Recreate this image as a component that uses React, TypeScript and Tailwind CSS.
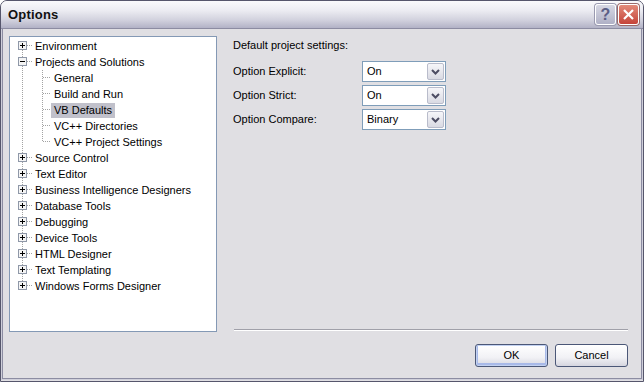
import React from "react";

type TreeNode = {
  label: string;
  expanded?: boolean;
  children?: string[];
};

const tree: TreeNode[] = [
  { label: "Environment" },
  {
    label: "Projects and Solutions",
    expanded: true,
    children: [
      "General",
      "Build and Run",
      "VB Defaults",
      "VC++ Directories",
      "VC++ Project Settings",
    ],
  },
  { label: "Source Control" },
  { label: "Text Editor" },
  { label: "Business Intelligence Designers" },
  { label: "Database Tools" },
  { label: "Debugging" },
  { label: "Device Tools" },
  { label: "HTML Designer" },
  { label: "Text Templating" },
  { label: "Windows Forms Designer" },
];

const dotted = "#a3a3a3";

function ExpandBox({ expanded }: { expanded?: boolean }) {
  return (
    <>
      <rect x="8.5" y="3.5" width="8" height="8" fill="#f4f4f4" stroke="#8f98a8" />
      <line x1="10" y1="7.5" x2="15" y2="7.5" stroke="#000" />
      {!expanded && <line x1="12.5" y1="5" x2="12.5" y2="10" stroke="#000" />}
    </>
  );
}

function TopRow({
  node,
  first,
  last,
}: {
  node: TreeNode;
  first: boolean;
  last: boolean;
}) {
  return (
    <div className="flex h-4 items-center">
      <svg width="25" height="16" className="shrink-0">
        <line
          x1="12.5"
          y1={first ? 8 : 0}
          x2="12.5"
          y2={last ? 8 : 16}
          stroke={dotted}
          strokeDasharray="1 1"
        />
        <line x1="17" y1="7.5" x2="23" y2="7.5" stroke={dotted} strokeDasharray="1 1" />
        <ExpandBox expanded={node.expanded} />
      </svg>
      <span className="whitespace-nowrap">{node.label}</span>
    </div>
  );
}

function ChildRow({
  label,
  last,
  selected,
}: {
  label: string;
  last: boolean;
  selected: boolean;
}) {
  return (
    <div className="flex h-4 items-center">
      <svg width="41" height="16" className="shrink-0">
        <line x1="12.5" y1="0" x2="12.5" y2="16" stroke={dotted} strokeDasharray="1 1" />
        <line
          x1="32.5"
          y1="0"
          x2="32.5"
          y2={last ? 8 : 16}
          stroke={dotted}
          strokeDasharray="1 1"
        />
        <line x1="33" y1="7.5" x2="41" y2="7.5" stroke={dotted} strokeDasharray="1 1" />
      </svg>
      <span
        className={`whitespace-nowrap pl-[3px] pr-[3px] leading-[15px] ${
          selected ? "bg-[#c1c1cb]" : ""
        }`}
      >
        {label}
      </span>
    </div>
  );
}

function Combo({ value }: { value: string }) {
  return (
    <div className="flex h-[21px] w-[84px] items-center border border-[#7f9db9] bg-white p-px">
      <span className="flex-1 pl-[3px] leading-[17px]">{value}</span>
      <div className="flex h-[17px] w-[17px] items-center justify-center rounded-[2px] border border-[#b9bccb] bg-[linear-gradient(to_bottom,#f6f6f9,#d9dae3)]">
        <svg width="9" height="6" viewBox="0 0 9 6">
          <path d="M1 1 L4.5 4.5 L8 1" fill="none" stroke="#4d4d63" strokeWidth="2" />
        </svg>
      </div>
    </div>
  );
}

function DialogButton({
  label,
  isDefault = false,
}: {
  label: string;
  isDefault?: boolean;
}) {
  return (
    <button
      type="button"
      className={`flex h-[23px] w-[73px] items-center justify-center rounded-[3px] border border-[#4b5777] bg-[linear-gradient(to_bottom,#ffffff,#f1f1f5_60%,#d6d6e0)] text-[11px] text-black ${
        isDefault ? "shadow-[inset_0_0_0_1px_#c2d1f1,inset_0_-1px_0_2px_#a8b9e8]" : ""
      }`}
    >
      {label}
    </button>
  );
}

export default function App() {
  const settings = [
    { label: "Option Explicit:", value: "On" },
    { label: "Option Strict:", value: "On" },
    { label: "Option Compare:", value: "Binary" },
  ];

  return (
    <div
      className="h-[382px] w-[644px] overflow-hidden rounded-t-[7px] border border-[#56566c] bg-[#e0dfe3] text-[11px] text-black"
      style={{ fontFamily: '"Liberation Sans", Arial, sans-serif' }}
    >
      {/* title bar */}
      <div className="flex h-[28px] items-center border-b border-[#8c8ca2] bg-[linear-gradient(to_bottom,#fafafc,#ececf2_35%,#d2d2de_70%,#b2b2c6)] pl-[7px] pr-[4px]">
        <span className="flex-1 text-[13px] font-bold tracking-[0.2px] text-[#111]">
          Options
        </span>
        <div className="flex gap-[2px]">
          <div className="flex h-[21px] w-[21px] items-center justify-center rounded-[3px] border border-white bg-[linear-gradient(to_bottom,#d7d8e4,#b0b1c6)] text-[16px] font-bold text-[#5c5f86] shadow-[0_0_0_1px_#9a9ab0]">
            ?
          </div>
          <div className="flex h-[21px] w-[21px] items-center justify-center rounded-[3px] border border-white bg-[linear-gradient(to_bottom,#e38b7a,#c5443a)] shadow-[0_0_0_1px_#9a6a6a]">
            <svg width="11" height="11" viewBox="0 0 11 11">
              <path d="M1 1 L10 10 M10 1 L1 10" stroke="#fff" strokeWidth="2.2" />
            </svg>
          </div>
        </div>
      </div>

      {/* body */}
      <div className="h-[351px] border-x border-b border-[#cfcfda]">
        <div className="flex h-full border-x border-b border-[#8c8ca2] pl-[6px] pt-[7px]">
          {/* tree */}
          <div className="h-[296px] w-[208px] shrink-0 border border-[#8499b5] bg-white pt-[1px]">
            {tree.map((node, i) => (
              <div key={node.label}>
                <TopRow node={node} first={i === 0} last={i === tree.length - 1} />
                {node.expanded &&
                  node.children?.map((child, ci) => (
                    <ChildRow
                      key={child}
                      label={child}
                      last={ci === (node.children?.length ?? 0) - 1}
                      selected={child === "VB Defaults"}
                    />
                  ))}
              </div>
            ))}
          </div>

          {/* settings */}
          <div className="ml-[16px] flex h-[341px] w-[395px] flex-col">
            <p className="mt-[2px] leading-[14px]">Default project settings:</p>
            <div className="mt-[9px] flex flex-col gap-[3px]">
              {settings.map((s) => (
                <div key={s.label} className="flex items-center">
                  <span className="w-[129px]">{s.label}</span>
                  <Combo value={s.value} />
                </div>
              ))}
            </div>

            <div className="mt-auto ml-[1px] h-[2px] border-t border-b border-t-[#a0a0a9] border-b-white" />
            <div className="mb-[10px] mt-[13px] flex justify-end gap-[7px]">
              <DialogButton label="OK" isDefault />
              <DialogButton label="Cancel" />
            </div>
          </div>
        </div>
      </div>
    </div>
  );
}
